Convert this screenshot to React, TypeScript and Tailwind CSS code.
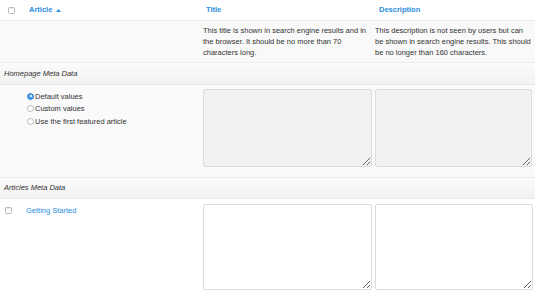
import React from "react";

const font = { fontFamily: '"Liberation Sans", Arial, sans-serif' };

const Checkbox: React.FC = () => (
  <span className="inline-block h-[7px] w-[7px] rounded-[1.5px] border border-[#b8b8b8] bg-white shadow-[inset_0_1px_1px_rgba(0,0,0,0.08)]" />
);

const Radio: React.FC<{ checked?: boolean }> = ({ checked }) =>
  checked ? (
    <span className="flex h-[7px] w-[7px] items-center justify-center rounded-full border border-[#3a86d8] bg-[#4a9aea]">
      <span className="h-[2px] w-[2px] rounded-full bg-white" />
    </span>
  ) : (
    <span className="inline-block h-[7px] w-[7px] rounded-full border border-[#b8b8b8] bg-white" />
  );

const radios = ["Default values", "Custom values", "Use the first featured article"];

const App: React.FC = () => {
  return (
    <div className="h-[297px] w-[540px] overflow-hidden bg-white text-[7.5px] text-[#333]" style={font}>
      <div className="w-[535px]">
        {/* header */}
        <div className="flex h-[20px] items-center">
          <div className="flex w-[203px] items-center">
            <div className="ml-[8px] flex items-center">
              <Checkbox />
            </div>
            <span className="ml-[14px] font-bold text-[#2a8ee0]">Article</span>
            <svg className="ml-[4px]" width="5" height="3" viewBox="0 0 5 3">
              <path d="M0 3 L2.5 0 L5 3 Z" fill="#2a8ee0" />
            </svg>
          </div>
          <div className="w-[172px] pl-[3px] font-bold text-[#2a8ee0]">Title</div>
          <div className="w-[160px] pl-[4px] font-bold text-[#2a8ee0]">Description</div>
        </div>

        {/* hints */}
        <div className="flex h-[42px] border-t border-[#ececec] bg-[#f9f9f9] pt-[4px] leading-[11px]">
          <div className="w-[203px]" />
          <div className="w-[172px] pr-[3px]">
            This title is shown in search engine results and in the browser. It should be no more than 70
            characters long.
          </div>
          <div className="w-[160px] pr-[2px]">
            This description is not seen by users but can be shown in search engine results. This should
            be no longer than 160 characters.
          </div>
        </div>

        {/* homepage section */}
        <div className="flex h-[22px] items-center border-t border-[#ececec] bg-[linear-gradient(#fbfbfb,#f2f2f2)] pl-[4px] italic">
          Homepage Meta Data
        </div>
        <div className="flex h-[93px] border-t border-[#e6e6e6] bg-[#fafafa] pt-[4px]">
          <div className="w-[203px] pl-[27px] pt-[1px]">
            {radios.map((r, i) => (
              <div key={r} className="flex h-[12.5px] items-center gap-[1px]">
                <Radio checked={i === 0} />
                <span>{r}</span>
              </div>
            ))}
          </div>
          <div className="w-[172px]">
            <textarea className="block h-[78px] w-[169px] rounded-[2px] border border-[#dcdcdc] bg-[#f1f1f1] outline-none" />
          </div>
          <div className="w-[160px]">
            <textarea className="block h-[78px] w-[157px] rounded-[2px] border border-[#dcdcdc] bg-[#f1f1f1] outline-none" />
          </div>
        </div>

        {/* articles section */}
        <div className="flex h-[21px] items-center border-t border-[#ececec] bg-[linear-gradient(#fbfbfb,#f2f2f2)] pl-[4px] italic">
          Articles Meta Data
        </div>
        <div className="flex border-t border-[#e6e6e6] bg-white pt-[5px]">
          <div className="flex w-[203px] items-start pt-[1px]">
            <div className="ml-[5px] mt-[2px] flex">
              <Checkbox />
            </div>
            <span className="ml-[14px] text-[#2a8ee0]">Getting Started</span>
          </div>
          <div className="w-[172px]">
            <textarea className="block h-[86px] w-[169px] rounded-[2px] border border-[#dcdcdc] bg-white outline-none" />
          </div>
          <div className="w-[160px]">
            <textarea className="block h-[86px] w-[158px] rounded-[2px] border border-[#dcdcdc] bg-white outline-none" />
          </div>
        </div>
      </div>
    </div>
  );
};

export default App;
